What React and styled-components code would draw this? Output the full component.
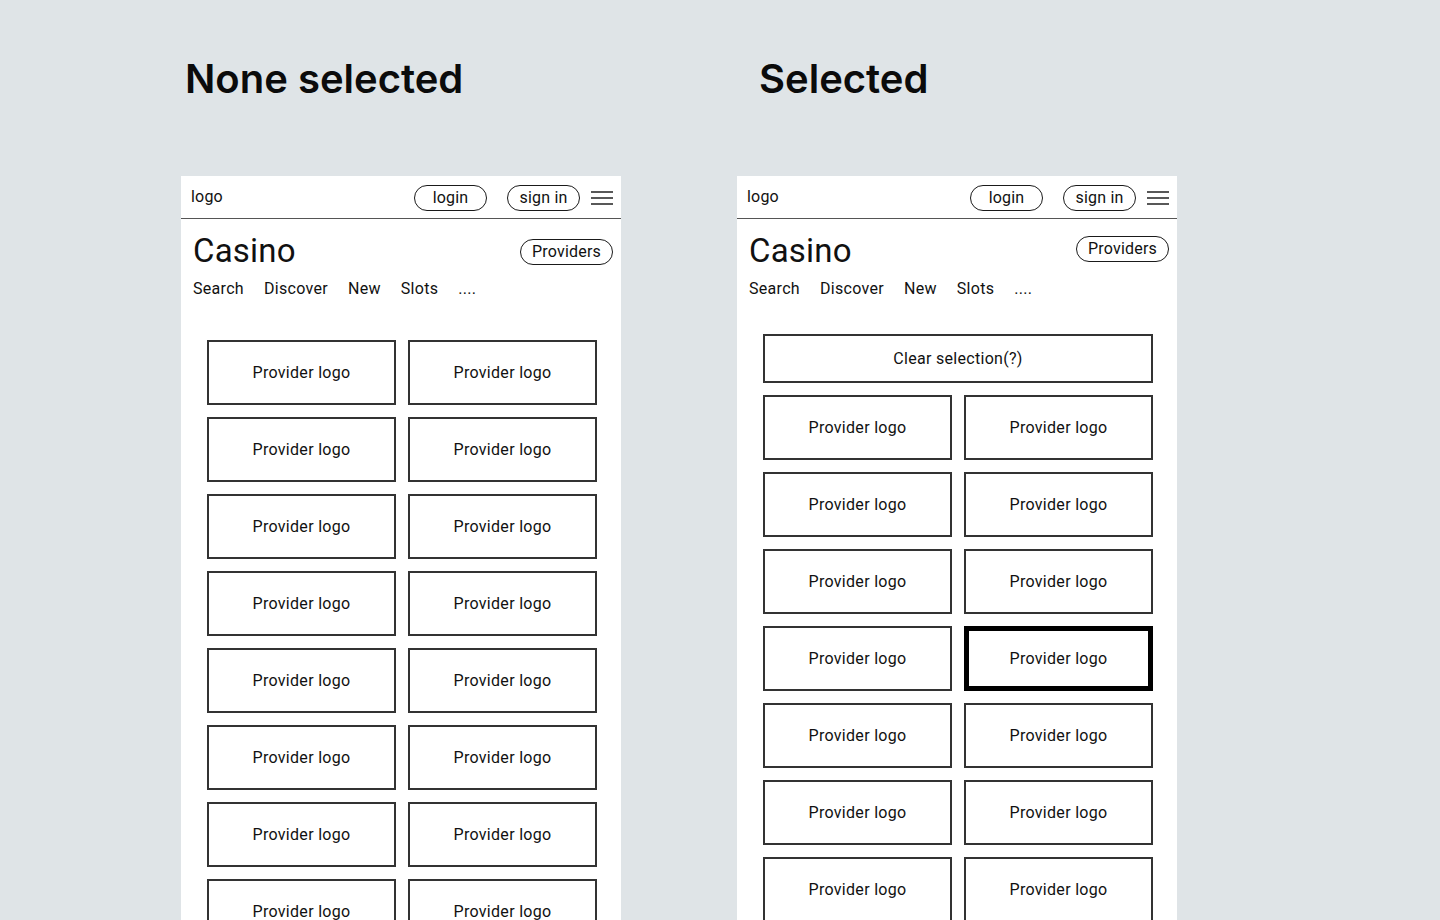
import React from 'react';
import styled, { createGlobalStyle } from 'styled-components';

const GlobalStyle = createGlobalStyle`
  html, body {
    margin: 0;
    padding: 0;
    background: #dfe4e7;
    overflow: hidden;
  }
  body {
    font-family: Roboto, "Liberation Sans", sans-serif;
    color: #111;
  }
`;

const Page = styled.div`
  display: flex;
  gap: 116px;
  padding: 55px 0 0 181px;
  height: 865px;
  overflow: hidden;
`;

const Column = styled.section`
  width: 440px;
  display: flex;
  flex-direction: column;
`;

const Heading = styled.h2`
  margin: 0 0 0 ${({ indent }) => indent}px;
  font-family: Inter, "Noto Sans", sans-serif;
  font-weight: 600;
  font-size: 40px;
  line-height: 48px;
  color: #0b0b0b;
`;

const Phone = styled.div`
  margin-top: 73px;
  background: #fff;
  flex: 1;
`;

const TopBar = styled.header`
  height: 42px;
  display: flex;
  align-items: center;
  padding: 0 8px 0 10px;
  border-bottom: 1px solid #555;
`;

const Logo = styled.span`
  font-size: 16px;
  letter-spacing: 0.2px;
  margin-top: -2px;
`;

const Pill = styled.button`
  box-sizing: border-box;
  height: 26px;
  padding: 0;
  width: ${({ w }) => w}px;
  border: 1.5px solid #1a1a1a;
  border-radius: 13px;
  background: #fff;
  font-family: Roboto, "Liberation Sans", sans-serif;
  font-size: 16px;
  letter-spacing: 0.2px;
  color: #111;
  line-height: 22px;
`;

const TopActions = styled.div`
  margin-left: auto;
  display: flex;
  align-items: center;
  gap: 20px;
  margin-top: 2px;
`;

const Burger = styled.svg`
  margin-left: 11px;
  margin-top: 2px;
  display: block;
`;

const TitleRow = styled.div`
  display: flex;
  justify-content: space-between;
  align-items: flex-start;
  padding: 0 8px 0 12px;
  margin-top: 12px;
`;

const Title = styled.h1`
  margin: 0;
  font-weight: 400;
  font-size: 33px;
  line-height: 40px;
  letter-spacing: 0.2px;
`;

const ProvidersPill = styled(Pill)`
  margin-top: ${({ lift }) => (lift ? 5 : 8)}px;
`;

const Nav = styled.nav`
  display: flex;
  gap: 20px;
  padding-left: 12px;
  margin-top: 8px;
  font-size: 16px;
  letter-spacing: 0.3px;
  line-height: 20px;
`;

const Content = styled.div`
  width: 390px;
  margin: ${({ top }) => top}px 0 0 26px;
  display: flex;
  flex-direction: column;
  gap: 12px;
`;

const Grid = styled.div`
  display: grid;
  grid-template-columns: 189px 189px;
  gap: 12px;
`;

const Tile = styled.div`
  box-sizing: border-box;
  height: 65px;
  border: ${({ selected }) => (selected ? '5px solid #000' : '2px solid #333')};
  display: flex;
  align-items: center;
  justify-content: center;
  font-size: 16px;
  letter-spacing: 0.3px;
`;

const ClearButton = styled.div`
  box-sizing: border-box;
  height: 49px;
  border: 2px solid #333;
  display: flex;
  align-items: center;
  justify-content: center;
  font-size: 16px;
  letter-spacing: 0.3px;
`;

const navItems = ['Search', 'Discover', 'New', 'Slots', '....'];

function Screen({ rows, selectedIndex, withClear, liftPill }) {
  const tiles = Array.from({ length: rows * 2 }, (_, i) => i);
  return (
    <Phone>
      <TopBar>
        <Logo>logo</Logo>
        <TopActions>
          <Pill w={73}>login</Pill>
          <Pill w={73}>sign in</Pill>
        </TopActions>
        <Burger width="22" height="14" viewBox="0 0 22 14">
          <path d="M0 1h22M0 7h22M0 13h22" stroke="#222" strokeWidth="1.3" />
        </Burger>
      </TopBar>
      <TitleRow>
        <Title>Casino</Title>
        <ProvidersPill w={93} lift={liftPill}>Providers</ProvidersPill>
      </TitleRow>
      <Nav>
        {navItems.map((n) => (
          <span key={n}>{n}</span>
        ))}
      </Nav>
      <Content top={withClear ? 35 : 41}>
        {withClear && <ClearButton>Clear selection(?)</ClearButton>}
        <Grid>
          {tiles.map((i) => (
            <Tile key={i} selected={i === selectedIndex}>
              Provider logo
            </Tile>
          ))}
        </Grid>
      </Content>
    </Phone>
  );
}

export default function App() {
  return (
    <>
      <GlobalStyle />
      <Page>
        <Column>
          <Heading indent={4}>None selected</Heading>
          <Screen rows={8} selectedIndex={-1} />
        </Column>
        <Column>
          <Heading indent={22}>Selected</Heading>
          <Screen rows={7} selectedIndex={7} withClear liftPill />
        </Column>
      </Page>
    </>
  );
}
